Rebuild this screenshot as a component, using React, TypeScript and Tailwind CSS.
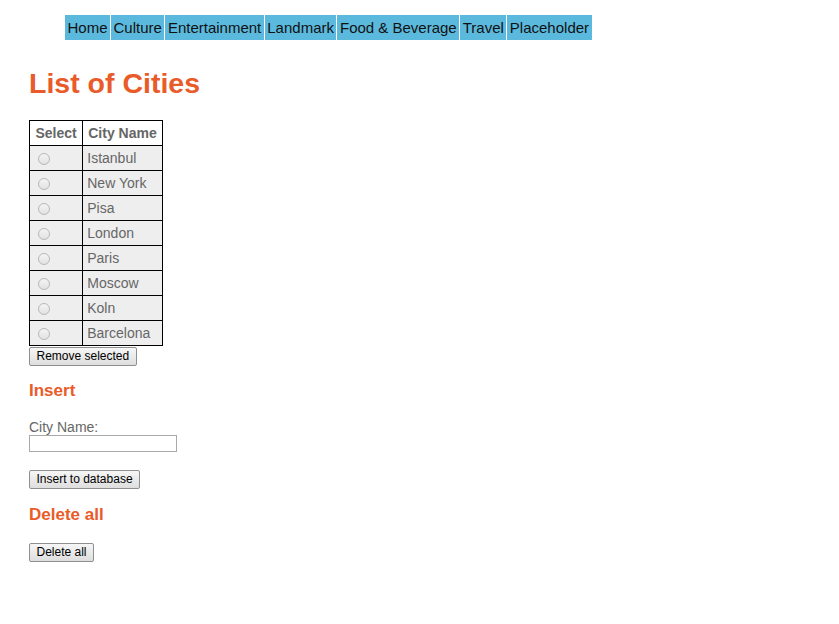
import React from "react";

const navItems = ["Home", "Culture", "Entertainment", "Landmark", "Food & Beverage", "Travel", "Placeholder"];
const cities = ["Istanbul", "New York", "Pisa", "London", "Paris", "Moscow", "Koln", "Barcelona"];

function Radio() {
  return (
    <span className="inline-block w-[12px] h-[12px] rounded-full border border-[#b8b8b8] bg-gradient-to-b from-[#f4f4f4] to-[#e2e2e2] align-middle" />
  );
}

function Btn({ children }: { children: React.ReactNode }) {
  return (
    <button className="h-[19px] px-[6.5px] text-[12px] leading-[15px] text-black border border-[#8f8f8f] rounded-[2px] bg-gradient-to-b from-[#f6f6f6] to-[#dedede] [font-family:'Liberation_Sans',Arial,sans-serif]">
      {children}
    </button>
  );
}

export default function App() {
  return (
    <div className="min-h-[624px] bg-white pl-[29px] pt-[15px] text-[#666] [font-family:'Liberation_Sans',Arial,sans-serif]">
      <nav className="ml-[36px] flex gap-px">
        {navItems.map((n) => (
          <div key={n} className="h-[25px] px-[2.5px] bg-[#5bb9de] text-[15px] leading-[25px] text-[#111]">
            {n}
          </div>
        ))}
      </nav>

      <h1 className="mt-[27px] text-[28.5px] leading-[33px] font-bold text-[#e95b28]">List of Cities</h1>

      <table className="mt-[20px] border-collapse text-[14px]">
        <thead>
          <tr>
            <th className="border border-black h-[25px] px-[5.5px] font-bold text-center leading-[16px]">Select</th>
            <th className="border border-black h-[25px] px-[5px] font-bold text-center leading-[16px]">City Name</th>
          </tr>
        </thead>
        <tbody>
          {cities.map((c) => (
            <tr key={c} className="bg-[#eeeeee]">
              <td className="border border-black h-[25px] pl-[8px] leading-[16px]">
                <Radio />
              </td>
              <td className="border border-black h-[25px] pl-[4px] leading-[16px]">{c}</td>
            </tr>
          ))}
        </tbody>
      </table>

      <div className="mt-[1px] flex">
        <Btn>Remove selected</Btn>
      </div>

      <h3 className="mt-[15px] text-[17px] leading-[20px] font-bold text-[#e95b28]">Insert</h3>

      <div className="mt-[18px] text-[14px] leading-[16px]">City Name:</div>
      <input type="text" className="block w-[148px] h-[17px] border border-[#a9a9a9] bg-white" />

      <div className="mt-[18px] flex">
        <Btn>Insert to database</Btn>
      </div>

      <h3 className="mt-[16px] text-[17px] leading-[20px] font-bold text-[#e95b28]">Delete all</h3>

      <div className="mt-[18px] flex">
        <Btn>Delete all</Btn>
      </div>
    </div>
  );
}
